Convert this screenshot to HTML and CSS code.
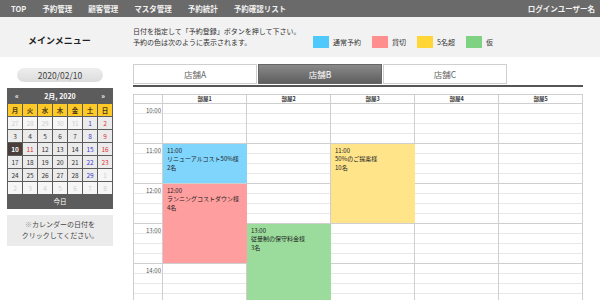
FILE: index.html
```html
<!DOCTYPE html>
<html lang="ja">
<head>
    <meta charset="UTF-8">
    <meta name="viewport" content="width=device-width, initial-scale=1.0">
    <title>予約管理 - メインメニュー</title>
    <link rel="stylesheet" href="styles.css">
</head>
<body>
    <nav class="topnav">
        <ul class="menu">
            <li>TOP</li>
            <li>予約管理</li>
            <li>顧客管理</li>
            <li>マスタ管理</li>
            <li>予約統計</li>
            <li>予約確認リスト</li>
        </ul>
        <div class="user">ログインユーザー名</div>
    </nav>

    <header class="page-head">
        <h1 class="page-title">メインメニュー</h1>
        <p class="guide">日付を指定して「予約登録」ボタンを押して下さい。<br>予約の色は次のように表示されます。</p>
        <ul class="legend">
            <li><span class="swatch normal"></span>通常予約</li>
            <li><span class="swatch charter"></span>貸切</li>
            <li><span class="swatch over"></span>5名超</li>
            <li><span class="swatch temp"></span>仮</li>
        </ul>
    </header>

    <div class="content">
        <aside class="side">
            <div class="date-pill">2020/02/10</div>
            <div class="calendar">
                <div class="cal-head"><span>«</span><span class="cal-month">2月, 2020</span><span>»</span></div>
                <div class="cal-grid">
                    <span class="wd">月</span><span class="wd">火</span><span class="wd">水</span><span class="wd">木</span><span class="wd">金</span><span class="wd">土</span><span class="wd">日</span>
                    <span class="other">27</span><span class="other">28</span><span class="other">29</span><span class="other">30</span><span class="other">31</span><span class="sat">1</span><span class="sun">2</span>
                    <span>3</span><span>4</span><span>5</span><span>6</span><span>7</span><span class="sat">8</span><span class="sun">9</span>
                    <span class="selected">10</span><span class="sun">11</span><span>12</span><span>13</span><span>14</span><span class="sat">15</span><span class="sun">16</span>
                    <span>17</span><span>18</span><span>19</span><span>20</span><span>21</span><span class="sat">22</span><span class="sun">23</span>
                    <span>24</span><span>25</span><span>26</span><span>27</span><span>28</span><span class="sat">29</span><span class="other">1</span>
                    <span class="other">2</span><span class="other">3</span><span class="other">4</span><span class="other">5</span><span class="other">6</span><span class="other">7</span><span class="other">8</span>
                </div>
                <div class="cal-today">今日</div>
            </div>
            <div class="note"><span class="mark">※</span>カレンダーの日付を<br>クリックしてください。</div>
        </aside>

        <main class="main">
            <div class="tabs">
                <div class="tab">店舗A</div>
                <div class="tab active">店舗B</div>
                <div class="tab">店舗C</div>
            </div>

            <div class="schedule">
                <div class="col-head"></div>
                <div class="col-head">部屋1</div>
                <div class="col-head">部屋2</div>
                <div class="col-head">部屋3</div>
                <div class="col-head">部屋4</div>
                <div class="col-head">部屋5</div>

                <div class="lane lane-time"></div>
                <div class="lane"></div>
                <div class="lane"></div>
                <div class="lane"></div>
                <div class="lane"></div>
                <div class="lane"></div>

                <div class="time t10">10:00</div>
                <div class="time t11">11:00</div>
                <div class="time t12">12:00</div>
                <div class="time t13">13:00</div>
                <div class="time t14">14:00</div>

                <div class="booking normal room1 from11 h1">11:00<br>リニューアルコスト50%様<br>2名</div>
                <div class="booking charter room1 from12 h2">12:00<br>ランニングコストダウン様<br>4名</div>
                <div class="booking temp room2 from13 h2">13:00<br>従量制の保守料金様<br>3名</div>
                <div class="booking over room3 from11 h2">11:00<br>50%のご提案様<br>10名</div>
            </div>
        </main>
    </div>
</body>
</html>
```

FILE: styles.css
```css
:root {
    --nav: #6a6a6a;
    --head-bg: #f2f2f2;
    --text: #333;
    --line: #cfcfcf;
    --line-light: #e8e8e8;
    --blue: #4fc9fb;
    --red: #ff8e8e;
    --yellow: #ffd636;
    --green: #80d283;
    --blue-soft: #7fd5fc;
    --red-soft: #ff9e9e;
    --yellow-soft: #ffe48a;
    --green-soft: #9bdc9c;
}

* {
    margin: 0;
    padding: 0;
    box-sizing: border-box;
    font-family: 'Noto Sans CJK JP', 'Noto Sans', sans-serif;
}

body {
    width: 600px;
    height: 300px;
    overflow: hidden;
    background: white;
    color: var(--text);
}

ul {
    list-style: none;
}

/* top navigation */
.topnav {
    height: 17px;
    background: var(--nav);
    display: flex;
    align-items: center;
    justify-content: space-between;
    padding: 0 5px 0 11px;
    color: #f2f2f2;
    font-size: 7.5px;
    font-weight: 700;
}

.menu {
    display: flex;
    gap: 16px;
}

/* header */
.page-head {
    height: 40px;
    background: var(--head-bg);
    display: flex;
    align-items: center;
}

.page-title {
    width: 133px;
    padding-left: 28px;
    font-size: 9px;
    font-weight: 700;
    color: #222;
    padding-top: 6px;
}

.guide {
    width: 180px;
    font-size: 7px;
    line-height: 11px;
    color: #333;
}

.legend {
    display: flex;
    gap: 11px;
    font-size: 7px;
    padding-top: 9px;
}

.legend li {
    display: flex;
    align-items: center;
    gap: 4px;
}

.swatch {
    width: 16px;
    height: 12px;
    display: inline-block;
}

.swatch.normal { background: var(--blue); }
.swatch.charter { background: var(--red); }
.swatch.over { background: var(--yellow); }
.swatch.temp { background: var(--green); }

/* content */
.content {
    display: flex;
    gap: 20px;
    padding-left: 7px;
}

.side {
    width: 106px;
    padding-top: 11px;
}

.date-pill {
    width: 86px;
    height: 14px;
    margin: 0 auto;
    border-radius: 7px;
    background: linear-gradient(#eeeeee, #dcdcdc);
    font-size: 8.5px;
    line-height: 14px;
    text-align: center;
    color: #444;
}

.calendar {
    margin-top: 6px;
    background: #5c5c5c;
    padding: 0 1px;
    color: white;
}

.cal-head {
    height: 15px;
    display: flex;
    align-items: center;
    justify-content: space-between;
    padding: 0 7px;
    font-size: 7px;
    font-weight: 700;
}

.cal-grid {
    display: grid;
    grid-template-columns: repeat(7, 1fr);
    grid-auto-rows: 12px;
    gap: 1px;
    padding: 1px 0;
}

.cal-grid span {
    background: #ebebeb;
    color: #333;
    font-size: 6.5px;
    line-height: 12px;
    text-align: center;
}

.cal-grid .wd {
    background: #ffc928;
    color: #4a3a1a;
    font-weight: 700;
}

.cal-grid .sat { color: #3b3bcf; }
.cal-grid .sun { color: #e03434; }

.cal-grid .other {
    background: #f6f6f6;
    color: #cfcfcf;
}

.cal-grid .selected {
    background: #4a3d3a;
    color: white;
    font-weight: 700;
}

.cal-today {
    height: 14px;
    font-size: 6.5px;
    line-height: 13px;
    text-align: center;
}

.note {
    margin-top: 6px;
    height: 31px;
    background: #ebebeb;
    font-size: 7px;
    line-height: 11px;
    padding-top: 4px;
    text-align: center;
    color: #444;
}

.note .mark {
    color: #999;
}

/* store tabs */
.main {
    width: 450px;
    padding-top: 7px;
}

.tabs {
    display: flex;
    gap: 1px;
    padding-bottom: 1px;
    border-bottom: 2px solid #555;
}

.tab {
    width: 124px;
    height: 20px;
    border: 1px solid var(--line);
    background: white;
    font-size: 8.5px;
    line-height: 18px;
    text-align: center;
    color: #666;
}

.tab.active {
    border-color: #666;
    background: linear-gradient(#8a8a8a, #5e5e5e);
    color: white;
}

/* schedule grid */
.schedule {
    margin-top: 7px;
    display: grid;
    grid-template-columns: 29px repeat(5, 1fr);
    grid-template-rows: 9px repeat(20, 10px);
    border-top: 1px solid var(--line);
    border-left: 1px solid var(--line);
}

.col-head {
    grid-row: 1;
    border-right: 1px solid var(--line);
    border-bottom: 1px solid var(--line);
    font-size: 5.5px;
    font-weight: 700;
    line-height: 8px;
    text-align: center;
    color: #333;
}

.lane {
    grid-row: 2 / span 20;
    border-right: 1px solid var(--line);
    background-image:
        repeating-linear-gradient(to bottom, transparent 0 39px, var(--line) 39px 40px),
        repeating-linear-gradient(to bottom, transparent 0 9px, var(--line-light) 9px 10px);
}

.lane:nth-of-type(7) { grid-column: 1; }
.lane:nth-of-type(8) { grid-column: 2; }
.lane:nth-of-type(9) { grid-column: 3; }
.lane:nth-of-type(10) { grid-column: 4; }
.lane:nth-of-type(11) { grid-column: 5; }
.lane:nth-of-type(12) { grid-column: 6; }

.time {
    grid-column: 1;
    grid-row-end: span 4;
    font-size: 6px;
    line-height: 8px;
    padding: 3px 2px 0 0;
    text-align: right;
    color: #555;
}

.t10 { grid-row-start: 2; }
.t11 { grid-row-start: 6; }
.t12 { grid-row-start: 10; }
.t13 { grid-row-start: 14; }
.t14 { grid-row-start: 18; }

.booking {
    font-size: 6px;
    line-height: 8.3px;
    padding: 3px 4px;
    color: #222;
    margin-bottom: 1px;
}

.booking.normal { background: var(--blue-soft); }
.booking.charter { background: var(--red-soft); }
.booking.over { background: var(--yellow-soft); }
.booking.temp { background: var(--green-soft); }

.room1 { grid-column: 2; }
.room2 { grid-column: 3; }
.room3 { grid-column: 4; }

.from11 { grid-row-start: 6; }
.from12 { grid-row-start: 10; }
.from13 { grid-row-start: 14; }

.h1 { grid-row-end: span 4; }
.h2 { grid-row-end: span 8; }
```
